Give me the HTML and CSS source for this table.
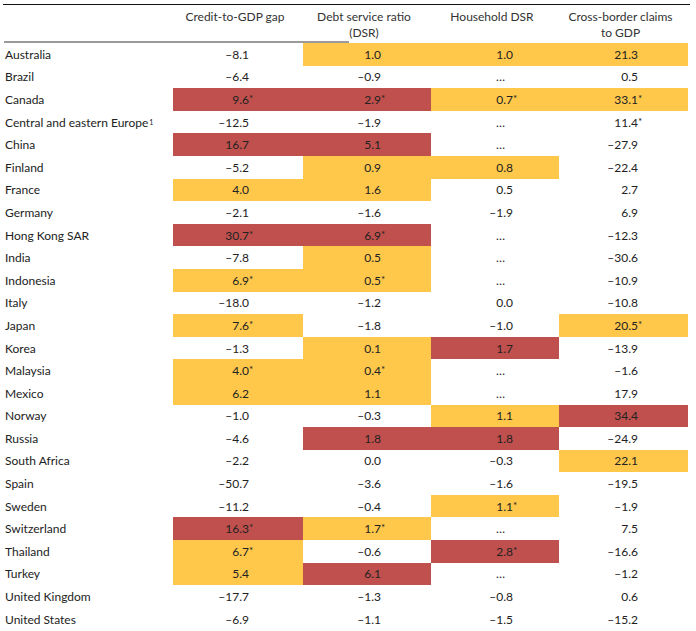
FILE: index.html
```html
<!DOCTYPE html>
<html>
<head>
<meta charset="utf-8">
<link rel="stylesheet" href="styles.css">
</head>
<body>
<div class="table">
  <div class="head">
    <div></div>
    <div class="h">Credit-to-GDP gap</div>
    <div class="h">Debt service ratio<br>(DSR)</div>
    <div class="h">Household DSR</div>
    <div class="h">Cross-border claims<br>to GDP</div>
  </div>
  <div class="rule"></div>
  <div class="body" id="body"></div>
</div>
<script src="app.js"></script>
</body>
</html>
```

FILE: app.js
```js
const rows = [
  ["Australia", ["–8.1",""], ["1.0","y"], ["1.0","y"], ["21.3","y"]],
  ["Brazil", ["–6.4",""], ["–0.9",""], ["…",""], ["0.5",""]],
  ["Canada", ["9.6*","r"], ["2.9*","r"], ["0.7*","y"], ["33.1*","y"]],
  ["Central and eastern Europe<sup>1</sup>", ["–12.5",""], ["–1.9",""], ["…",""], ["11.4*",""]],
  ["China", ["16.7","r"], ["5.1","r"], ["…",""], ["–27.9",""]],
  ["Finland", ["–5.2",""], ["0.9","y"], ["0.8","y"], ["–22.4",""]],
  ["France", ["4.0","y"], ["1.6","y"], ["0.5",""], ["2.7",""]],
  ["Germany", ["–2.1",""], ["–1.6",""], ["–1.9",""], ["6.9",""]],
  ["Hong Kong SAR", ["30.7*","r"], ["6.9*","r"], ["…",""], ["–12.3",""]],
  ["India", ["–7.8",""], ["0.5","y"], ["…",""], ["–30.6",""]],
  ["Indonesia", ["6.9*","y"], ["0.5*","y"], ["…",""], ["–10.9",""]],
  ["Italy", ["–18.0",""], ["–1.2",""], ["0.0",""], ["–10.8",""]],
  ["Japan", ["7.6*","y"], ["–1.8",""], ["–1.0",""], ["20.5*","y"]],
  ["Korea", ["–1.3",""], ["0.1","y"], ["1.7","r"], ["–13.9",""]],
  ["Malaysia", ["4.0*","y"], ["0.4*","y"], ["…",""], ["–1.6",""]],
  ["Mexico", ["6.2","y"], ["1.1","y"], ["…",""], ["17.9",""]],
  ["Norway", ["–1.0",""], ["–0.3",""], ["1.1","y"], ["34.4","r"]],
  ["Russia", ["–4.6",""], ["1.8","r"], ["1.8","r"], ["–24.9",""]],
  ["South Africa", ["–2.2",""], ["0.0",""], ["–0.3",""], ["22.1","y"]],
  ["Spain", ["–50.7",""], ["–3.6",""], ["–1.6",""], ["–19.5",""]],
  ["Sweden", ["–11.2",""], ["–0.4",""], ["1.1*","y"], ["–1.9",""]],
  ["Switzerland", ["16.3*","r"], ["1.7*","y"], ["…",""], ["7.5",""]],
  ["Thailand", ["6.7*","y"], ["–0.6",""], ["2.8*","r"], ["–16.6",""]],
  ["Turkey", ["5.4","y"], ["6.1","r"], ["…",""], ["–1.2",""]],
  ["United Kingdom", ["–17.7",""], ["–1.3",""], ["–0.8",""], ["0.6",""]],
  ["United States", ["–6.9",""], ["–1.1",""], ["–1.5",""], ["–15.2",""]]
];
const body = document.getElementById("body");
let html = "";
for (const r of rows) {
  html += '<div class="name">' + r[0] + '</div>';
  for (let i = 1; i < 5; i++) {
    const [v, c] = r[i];
    let cls = "cell c" + i + (c ? " " + c : "");
    let inner;
    if (v === "…") { cls += " dots"; inner = "…"; }
    else if (v.endsWith("*")) inner = v.slice(0, -1) + '<span class="ast">*</span>';
    else inner = v;
    html += '<div class="' + cls + '"><span>' + inner + '</span></div>';
  }
}
body.innerHTML = html;
```

FILE: styles.css
```css
html, body {
  margin: 0;
  padding: 0;
  background: #fff;
}
body {
  font-family: Lato, "Noto Sans", sans-serif;
  font-size: 12px;
  color: #222;
}
.table {
  margin: 4px 0 0 3px;
  width: 687px;
  border-top: 1px solid #111;
}
.head, .body {
  display: grid;
  grid-template-columns: 170px 130px 128px 128px 129px;
}
.head {
  height: 36px;
  padding-top: 4px;
  box-sizing: border-box;
  line-height: 16px;
  color: #333;
}
.h {
  text-align: center;
  padding-right: 6px;
}
.rule {
  width: 345px;
  height: 2px;
  background: #9a9a9a;
  margin-left: 1px;
}
.body {
  grid-auto-rows: 22.6px;
}
.name {
  display: flex;
  align-items: center;
  padding-left: 2px;
  white-space: nowrap;
}
.name sup {
  font-size: 7px;
  line-height: 0;
  vertical-align: 5px;
  margin-left: 1px;
}
.cell {
  display: flex;
  align-items: center;
  justify-content: flex-end;
}
.c1 { padding-right: 54px; }
.c2 { padding-right: 50px; }
.c3 { padding-right: 46px; }
.c4 { padding-right: 50px; }
.c3.dots { padding-right: 54px; }
.ast {
  display: inline-block;
  width: 0;
  font-size: 10px;
  vertical-align: 2px;
  line-height: 0;
}
.y { background: #ffc84b; }
.r { background: #c0504d; }
```
